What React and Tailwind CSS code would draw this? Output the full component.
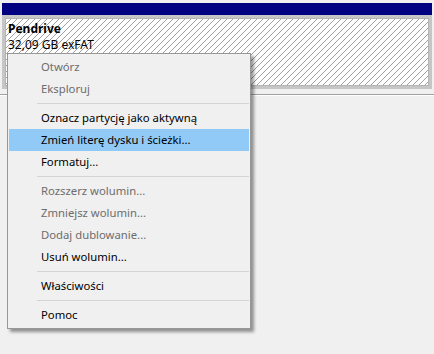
export default function App() {
  const items = [
    { t: "Otwórz", d: true },
    { t: "Eksploruj", d: true },
    { sep: true },
    { t: "Oznacz partycję jako aktywną" },
    { t: "Zmień literę dysku i ścieżki...", h: true },
    { t: "Formatuj..." },
    { sep: true },
    { t: "Rozszerz wolumin...", d: true },
    { t: "Zmniejsz wolumin...", d: true },
    { t: "Dodaj dublowanie...", d: true },
    { t: "Usuń wolumin..." },
    { sep: true },
    { t: "Właściwości" },
    { sep: true },
    { t: "Pomoc" },
  ];
  return (
    <div className="relative w-[434px] h-[354px] bg-[#f0f0f0] overflow-hidden font-['Segoe_UI','Noto_Sans',sans-serif] text-[11.3px]">
      <div className="pt-[3px] px-[2px]">
        <div className="h-[12px] bg-[#000080]" />
        <div className="bg-[#c6c6c6] p-[3px]">
          <div className="h-[68px] border border-[#b4b4b4] bg-white bg-[image:repeating-linear-gradient(135deg,#ffffff_0_3.1px,#a0a0a0_3.1px_4.24px)] pl-[2px] pt-[2px] leading-[16px] text-black text-[12px]">
            <div className="font-bold">Pendrive</div>
            <div>32,09 GB exFAT</div>
          </div>
        </div>
      </div>
      <div className="mt-[5px] border-t border-[#a0a0a0]" />
      <div className="h-px bg-white" />

      <div className="absolute left-[7px] top-[53px] w-[244px] border border-[#979797] bg-[#f0f0f0] px-[1px] py-[2px] shadow-[3px_3px_3px_rgba(0,0,0,0.4)]">
        {items.map((it, i) =>
          it.sep ? (
            <div key={i} className="h-[7px] flex items-center pl-[28px]">
              <div className="h-px w-full bg-[#d4d4d4]" />
            </div>
          ) : (
            <div
              key={i}
              className={
                "h-[22px] leading-[22px] pl-[32px] whitespace-nowrap " +
                (it.d ? "text-[#6d6d6d] " : "text-black ") +
                (it.h ? "bg-[#91c9f7]" : "")
              }
            >
              {it.t}
            </div>
          )
        )}
      </div>
    </div>
  );
}
